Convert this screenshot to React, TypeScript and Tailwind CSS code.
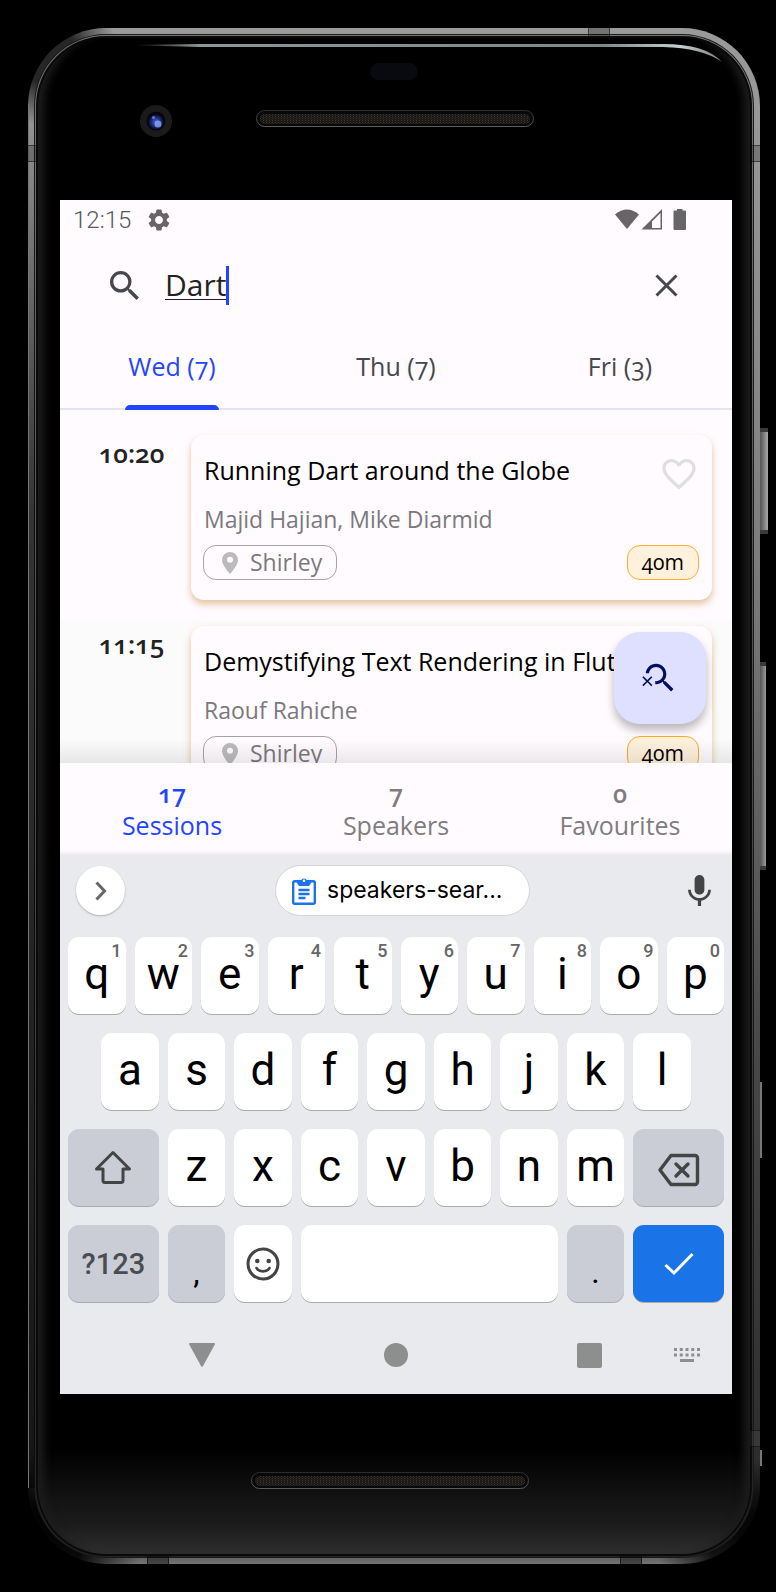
import type { ReactNode } from 'react';

type Key = { label: string; hint?: string; span: string; content?: ReactNode };

const letter = 'col-span-2 bg-white pb-1 text-[44px]';

const letters = (text: string): Key[] => text.split('').map((label) => ({ label, span: letter }));

function ShiftIcon() {
  return (
    <svg width="38" height="38" viewBox="0 0 38 38" fill="none" stroke="#444" strokeWidth="3" strokeLinejoin="round">
      <path d="M19 3.500 35.500 20H29v11.500a2 2 0 0 1-2 2H11a2 2 0 0 1-2-2V20H2.500Z" />
    </svg>
  );
}

function BackspaceIcon() {
  return (
    <svg width="42" height="34" viewBox="0 0 42 34" fill="none" stroke="#444" strokeWidth="3.400" strokeLinejoin="round" strokeLinecap="round">
      <path d="M13 2.500H37a2.500 2.500 0 0 1 2.500 2.500V29a2.500 2.500 0 0 1-2.500 2.500H13L2 17Z" />
      <path d="m18 11 12 12M30 11 18 23" />
    </svg>
  );
}

function SmileIcon() {
  return (
    <svg width="34" height="34" viewBox="0 0 34 34" fill="none" stroke="#444" strokeWidth="3">
      <circle cx="17" cy="17" r="15" />
      <circle cx="11.300" cy="14" r="2.300" fill="#444" stroke="none" />
      <circle cx="22.700" cy="14" r="2.300" fill="#444" stroke="none" />
      <path d="M10.500 21C13 25.500 21 25.500 23.500 21" strokeLinecap="round" strokeWidth="2.600" />
    </svg>
  );
}

function CheckIcon() {
  return (
    <svg width="30" height="24" viewBox="0 0 30 24" fill="none" stroke="#fff" strokeWidth="3">
      <path d="m1.500 13 8.500 8L28.500 2" />
    </svg>
  );
}

const keys: Key[] = [
  ...letters('qwertyuiop').map((key, i) => ({ ...key, hint: String((i + 1) % 10) })),
  { label: 'a', span: 'col-start-2 col-span-2 bg-white pb-1 text-[44px]' },
  ...letters('sdfghjkl'),
  { label: 'Shift', span: 'col-start-1 col-span-3 bg-[#cacdd6]', content: <ShiftIcon /> },
  ...letters('zxcvbnm'),
  { label: 'Delete', span: 'col-span-3 bg-[#cacdd6] pt-1', content: <BackspaceIcon /> },
  { label: '?123', span: 'col-span-3 bg-[#cacdd6] pt-[2px] text-[29px] font-medium text-[#4a4c50]' },
  { label: ',', span: 'col-span-2 bg-[#cacdd6] pt-[16px] text-[32px]' },
  { label: 'Emoji', span: 'col-span-2 bg-white', content: <SmileIcon /> },
  { label: 'Space', span: 'col-span-8 bg-white', content: <span /> },
  { label: '.', span: 'col-span-2 bg-[#cacdd6] pt-[16px] text-[32px]' },
  { label: 'Done', span: 'col-span-3 bg-[#1b73e8]', content: <CheckIcon /> },
];

function KeyButton({ item }: { item: Key }) {
  return (
    <button
      type="button"
      aria-label={item.label}
      className={`relative flex h-[77px] items-center justify-center rounded-[11px] leading-none shadow-[0_1px_0_#a9abae] ${item.span}`}
    >
      {item.content ?? item.label}
      {item.hint && (
        <span className="absolute top-[5px] right-1 text-[18px] leading-[18px] font-medium text-[#666]">{item.hint}</span>
      )}
    </button>
  );
}

function StatusBar() {
  return (
    <div className="flex h-10 items-center justify-between pr-[46px] pl-[13px] font-[Roboto,sans-serif] text-[24px] font-light text-[#58565a] lining-nums">
      <div className="flex items-center gap-[17px]">
        <span>12:15</span>
        <svg width="22" height="22" viewBox="2 2 20 20" fill="#676568">
          <path d="M19.140 12.940c.04-.3.06-.61.06-.94 0-.32-.02-.64-.07-.94l2.030-1.580c.18-.14.23-.41.12-.61l-1.920-3.320c-.12-.22-.37-.29-.59-.22l-2.390.96c-.5-.38-1.030-.7-1.620-.94l-.36-2.540c-.04-.24-.24-.41-.48-.41h-3.840c-.24 0-.43.17-.47.41l-.36 2.540c-.59.24-1.130.57-1.620.94l-2.390-.96c-.22-.08-.47 0-.59.22L2.740 8.870c-.12.21-.08.47.12.61l2.030 1.580c-.05.3-.09.63-.09.94s.02.64.07.94l-2.030 1.580c-.18.14-.23.41-.12.61l1.920 3.320c.12.22.37.29.59.22l2.390-.96c.5.38 1.030.7 1.620.94l.36 2.540c.05.24.24.41.48.41h3.840c.24 0 .44-.17.47-.41l.36-2.540c.59-.24 1.130-.56 1.620-.94l2.390.96c.22.08.47 0 .59-.22l1.920-3.320c.12-.22.07-.47-.12-.61l-2.010-1.580zM12 15.600c-1.980 0-3.600-1.620-3.600-3.600s1.620-3.600 3.600-3.600 3.600 1.620 3.600 3.600-1.620 3.600-3.600 3.600z" />
        </svg>
      </div>
      <svg width="71" height="22" viewBox="0 0 71 22" fill="#676568">
        <path d="M0 5.500Q12 -4.500 24 5.500L12 20Z" />
        <path fillRule="evenodd" d="M26.500 20.500 47 0V20.500ZM37 12.500V19H45.500V4Z" />
        <path d="M59.500 1.500h2.500V0h5.500v1.500H70q1 0 1 1V20q0 1-1 1H59.500q-1 0-1-1V2.500q0-1 1-1Z" />
      </svg>
    </div>
  );
}

const days = [
  { label: 'Wed (7)', active: true },
  { label: 'Thu (7)', active: false },
  { label: 'Fri (3)', active: false },
];

const sessions = [
  { time: '10:20', title: 'Running Dart around the Globe', by: 'Majid Hajian, Mike Diarmid', row: 'pt-[25px]' },
  { time: '11:15', title: 'Demystifying Text Rendering in Flutter', by: 'Raouf Rahiche', row: 'bg-[#fafbfa] pt-[6px]' },
];

const totals = [
  { count: 17, label: 'Sessions', tone: 'text-[#1f45ff]' },
  { count: 7, label: 'Speakers', tone: 'text-[#7f7d80]' },
  { count: 0, label: 'Favourites', tone: 'text-[#7f7d80]' },
];

function SessionRow({ time, title, by, row }: (typeof sessions)[number]) {
  return (
    <li className={`flex pb-5 pr-5 ${row}`}>
      <time className="w-[131px] shrink-0 pt-[2px] pl-[12px] text-center text-[26px] leading-[32px] font-semibold text-[#222]">
        {time}
      </time>
      <article className="min-w-0 flex-1 rounded-[13px] bg-[#fffbff] px-[13px] pt-[19px] pb-5 shadow-[0_4px_7px_rgba(200,140,60,0.5)]">
        <div className="flex items-start justify-between">
          <h2 className="truncate text-[25px] leading-[32px] font-medium text-black">{title}</h2>
          <button type="button" aria-label={`Add ${title} to favourites`} className="shrink-0">
            <svg width="40" height="40" viewBox="0 0 24 24" fill="#e0dfe0">
              <path d="M16.500 3c-1.740 0-3.410.81-4.500 2.090C10.910 3.810 9.240 3 7.500 3 4.420 3 2 5.420 2 8.500c0 3.780 3.400 6.860 8.550 11.540L12 21.350l1.450-1.320C18.600 15.360 22 12.280 22 8.500 22 5.420 19.580 3 16.500 3zm-4.400 15.550-.1.100-.1-.1C7.140 14.240 4 11.390 4 8.500 4 6.500 5.500 5 7.500 5c1.540 0 3.040.99 3.570 2.360h1.870C13.460 5.990 14.960 5 16.500 5c2 0 3.500 1.500 3.500 3.500 0 2.890-3.140 5.740-7.900 10.050z" />
            </svg>
          </button>
        </div>
        <p className="mt-2 text-[23px] leading-[34px] text-[#7b797c]">{by}</p>
        <div className="mt-[9px] -ml-px flex justify-between">
          <span className="flex h-[35px] items-center gap-3 rounded-[13px] border border-[#a5a3a6] pr-[14px] pl-[18px] text-[23px] text-[#7b797c]">
            <svg width="16" height="22" viewBox="0 0 16 22" fill="#bcbabc">
              <path fillRule="evenodd" d="M8 0a8 8 0 0 1 8 8c0 5.500-8 14-8 14S0 13.500 0 8a8 8 0 0 1 8-8Zm0 4.800a3 3 0 1 0 0 6 3 3 0 0 0 0-6Z" />
            </svg>
            Shirley
          </span>
          <span className="flex h-[35px] items-center rounded-[13px] border border-[#ffab2e] bg-[#fff1dc] px-[14px] text-[21px] font-medium text-black">
            40m
          </span>
        </div>
      </article>
    </li>
  );
}

function SearchApp() {
  return (
    <main className="bg-[#fffbff] font-['Open_Sans',sans-serif] oldstyle-nums">
      <StatusBar />
      <div className="flex h-[90px] items-center pr-[50px] pl-[50px]">
        <svg width="29" height="29" viewBox="3 3 17.500 17.500" fill="#46474c">
          <path d="M15.500 14h-.79l-.28-.27A6.471 6.471 0 0 0 16 9.500 6.500 6.500 0 1 0 9.500 16c1.610 0 3.090-.59 4.230-1.570l.27.28v.79l5 4.990L20.490 19l-4.990-5zm-6 0C7.010 14 5 11.990 5 9.500S7.010 5 9.500 5 14 7.010 14 9.500 11.990 14 9.500 14z" />
        </svg>
        <input
          type="text"
          aria-label="Search"
          defaultValue="Dart"
          className="ml-[26px] field-sizing-content text-[30px] leading-[42px] text-[#222] underline decoration-1 underline-offset-3 outline-none"
        />
        <span className="h-[39px] w-[3px] bg-[#1f45ff]" />
        <button type="button" aria-label="Clear search" className="ml-auto p-[4px]">
          <svg width="23" height="23" viewBox="0 0 23 23" stroke="#46474c" strokeWidth="3">
            <path d="m1.500 1.500 20 20M21.500 1.500l-20 20" />
          </svg>
        </button>
      </div>
      <nav className="grid grid-cols-3 border-b-2 border-[#e4e4f1]">
        {days.map((day) => (
          <button
            key={day.label}
            type="button"
            className={`relative h-[78px] pb-[4px] text-[25px] font-medium ${day.active ? 'text-[#1f45ff]' : 'text-[#46474c]'}`}
          >
            {day.label}
            {day.active && (
              <span className="absolute -bottom-[2px] left-1/2 h-[5px] w-[94px] -translate-x-1/2 rounded-t-[5px] bg-[#1f45ff]" />
            )}
          </button>
        ))}
      </nav>
      <section className="relative h-[353px] overflow-hidden">
        <ul>
          {sessions.map((session) => (
            <SessionRow key={session.time} {...session} />
          ))}
        </ul>
        <div className="absolute inset-x-0 bottom-0 h-6 bg-linear-to-t from-black/8 to-transparent" />
        <button
          type="button"
          aria-label="Close search"
          className="absolute right-[26px] bottom-[39px] flex size-[92px] items-center justify-center rounded-[26px] bg-[#dfe0ff] shadow-[0_6px_10px_rgba(0,0,0,0.28)]"
        >
          <svg width="38" height="38" viewBox="0 0 24 24" fill="#00105c">
            <path d="M15.500 14h-.79l-.28-.27C15.410 12.590 16 11.110 16 9.500 16 5.910 13.090 3 9.500 3 6.080 3 3.280 5.640 3.030 9h2.020C5.300 6.750 7.180 5 9.500 5 11.990 5 14 7.010 14 9.500S11.990 14 9.500 14c-.17 0-.33-.03-.5-.05v2.020c.17.02.33.03.5.03 1.610 0 3.090-.59 4.230-1.570l.27.28v.79l5 4.990L20.490 19l-4.990-5z" />
            <path d="M6.470 10.820 4 13.290l-2.470-2.470-.71.71L3.290 14 .82 16.470l.71.71L4 14.710l2.470 2.470.71-.71L4.710 14l2.470-2.470z" />
          </svg>
        </button>
      </section>
      <nav className="grid h-[92px] grid-cols-3 pt-[14px] shadow-[inset_0_-5px_5px_-4px_rgba(0,0,0,0.12)]">
        {totals.map((total) => (
          <button key={total.label} type="button" className={`flex flex-col items-center text-[25px] leading-[32px] ${total.tone}`}>
            <span className="font-semibold">{total.count}</span>
            <span>{total.label}</span>
          </button>
        ))}
      </nav>
    </main>
  );
}

function Keyboard() {
  return (
    <section aria-label="Keyboard" className="bg-[#e8eaed] px-2 font-[Roboto,sans-serif] text-black">
      <div className="flex items-center justify-between pt-[10px] pr-[13px] pb-[21px] pl-2">
        <button type="button" aria-label="More" className="flex size-[49px] items-center justify-center rounded-full bg-white shadow-[0_1px_2px_rgba(0,0,0,0.25)]">
          <svg width="12" height="20" viewBox="0 0 12 20" fill="none" stroke="#666" strokeWidth="3">
            <path d="m1.500 1.500 8 8.500-8 8.500" />
          </svg>
        </button>
        <button type="button" className="mr-2 flex h-[51px] w-[255px] items-center gap-[11px] rounded-full border border-[#d2d4d7] bg-white pl-4 font-[Inter,sans-serif] text-[23px]">
          <svg width="24" height="28" viewBox="0 0 24 28" fill="none" stroke="#1b73e8" strokeWidth="2.400">
            <rect x="1.200" y="4.200" width="21.600" height="22.600" rx="1.500" />
            <path d="M5 3.500h4a3.200 3.200 0 0 1 6 0h4V6l-2 3H7L5 6Z" fill="#1b73e8" stroke="none" />
            <circle cx="12" cy="3.800" r="1.300" fill="#fff" stroke="none" />
            <path d="M6.500 13h11M6.500 17h11M6.500 21h7" />
          </svg>
          speakers-sear...
        </button>
        <button type="button" aria-label="Voice input">
          <svg width="23" height="31" viewBox="5 2 14 19" fill="#444">
            <path d="M12 14c1.660 0 2.990-1.340 2.990-3L15 5c0-1.660-1.340-3-3-3S9 3.340 9 5v6c0 1.660 1.340 3 3 3zm5.300-3c0 3-2.540 5.100-5.300 5.100S6.700 14 6.700 11H5c0 3.410 2.720 6.230 6 6.720V21h2v-3.280c3.280-.48 6-3.300 6-6.720h-1.700z" />
          </svg>
        </button>
      </div>
      <div className="grid grid-cols-20 gap-x-[9px] gap-y-[19px]">
        {keys.map((item) => (
          <KeyButton key={item.label} item={item} />
        ))}
      </div>
      <div className="grid h-[92px] grid-cols-[1fr_auto_1fr] items-center pt-[14px]">
        <button type="button" aria-label="Back" className="ml-[121px] justify-self-start">
          <svg width="26" height="24" viewBox="0 0 26 24" fill="#8c8f8d">
            <path d="M1 0h24q1.500 0 .8 1.500L14 23q-1 1.600-2 0L.2 1.500Q-.4 0 1 0Z" />
          </svg>
        </button>
        <button type="button" aria-label="Home" className="size-6 rounded-full bg-[#8c8f8d]" />
        <div className="flex items-center justify-end gap-[72px] pr-6">
          <button type="button" aria-label="Overview" className="size-[25px] rounded-[2px] bg-[#8c8f8d]" />
          <button type="button" aria-label="Switch keyboard">
            <svg width="26" height="14" viewBox="0 0 26 14" fill="#8c8f8d">
              <path d="M0 0h3v3H0zM5.750 0h3v3h-3zM11.500 0h3v3h-3zM17.250 0h3v3h-3zM23 0h3v3h-3zM0 5.500h3v3H0zM5.750 5.500h3v3h-3zM11.500 5.500h3v3h-3zM17.250 5.500h3v3h-3zM23 5.500h3v3h-3zM6 11h14v3H6z" />
            </svg>
          </button>
        </div>
      </div>
    </section>
  );
}

function Speaker({ x, y }: { x: number; y: number }) {
  return (
    <g>
      <rect x={x + 0.5} y={y + 0.5} width="277" height="16" rx="8" fill="#080808" stroke="url(#rim)" />
      <rect x={x + 4} y={y + 4} width="270" height="10" rx="5" fill="url(#mesh)" />
    </g>
  );
}

function TopBezel() {
  return (
    <svg className="block w-full" viewBox="0 0 712 162" aria-hidden="true">
      <defs>
        <linearGradient id="shine" x1="92" x2="684" y1="0" y2="0" gradientUnits="userSpaceOnUse">
          <stop offset="0" stopColor="#9aa5a5" stopOpacity="0" />
          <stop offset=".12" stopColor="#8d9696" />
          <stop offset=".8" stopColor="#7f8888" />
          <stop offset=".93" stopColor="#c5d0d0" />
          <stop offset="1" stopColor="#777" />
        </linearGradient>
        <linearGradient id="rim" x1="0" x2="0" y1="0" y2="1">
          <stop offset="0" stopColor="#2c2c2c" />
          <stop offset="1" stopColor="#5e5e5c" />
        </linearGradient>
        <pattern id="mesh" width="3" height="2" patternUnits="userSpaceOnUse">
          <rect width="3" height="2" fill="#171614" />
          <rect width="1" height="1" fill="#3c372f" />
          <rect x="1.500" y="1" width="1" height="1" fill="#2e2a24" />
        </pattern>
        <radialGradient id="lens">
          <stop offset="0" stopColor="#4d68d8" />
          <stop offset=".6" stopColor="#1c2a78" />
          <stop offset="1" stopColor="#05060f" />
        </radialGradient>
      </defs>
      <path d="M92 7 L160 6H625Q668 6 684 24Q664 10 625 9H160Z" fill="url(#shine)" />
      <rect x="332" y="25" width="48" height="17" rx="8.500" fill="#090a0f" />
      <circle cx="118" cy="83" r="16" fill="#1c1a1b" />
      <circle cx="118" cy="83" r="9.500" fill="#05060f" />
      <circle cx="118" cy="84" r="8" fill="url(#lens)" />
      <circle cx="120" cy="86" r="3.500" fill="#90a4f4" opacity=".8" />
      <circle cx="115.500" cy="79.500" r="1.500" fill="#5f79d8" />
      <Speaker x={218} y={72} />
    </svg>
  );
}

function BottomBezel() {
  return (
    <svg className="block w-full" viewBox="0 0 712 160" aria-hidden="true">
      <Speaker x={213} y={78} />
    </svg>
  );
}

export default function App() {
  return (
    <div className="min-h-screen bg-black pt-7 pr-4 pb-7 pl-7">
      <div className="relative rounded-[78px] bg-[radial-gradient(circle_70px_at_20px_28px,rgba(0,0,0,0.75)_40%,transparent),radial-gradient(circle_100px_at_12px_calc(100%-16px),rgba(0,0,0,0.9)_40%,transparent),radial-gradient(circle_90px_at_calc(100%-12px)_calc(100%-16px),rgba(0,0,0,0.8)_40%,transparent),linear-gradient(to_bottom,#9a9a9a_0%,#949494_10%,#7c7c7c_35%,#4a4a4a_65%,#2c2c2c_94%,#1c1c1c_98%,#747474_100%)] p-[6px]">
        <div className="absolute top-[76px] bottom-[76px] left-0 w-[7px] border-l border-[#777] bg-linear-to-b from-transparent via-black/60 via-30% to-black/50" />
        <div className="absolute top-[400px] -right-[8px] h-[106px] w-[8px] border-y-4 border-[#3a3a3a] bg-linear-to-r from-[#555] to-[#aaa]" />
        <div className="absolute top-[634px] -right-[6px] h-[208px] w-[6px] border-y-4 border-[#3a3a3a] bg-linear-to-r from-[#555] to-[#999]" />
        <div className="absolute top-[1054px] -right-[2px] h-[76px] w-[2px] bg-[#777]" />
        <div className="absolute top-[1422px] -right-[2px] h-[16px] w-[2px] bg-[#777]" />
        <div className="absolute top-[117px] left-0 h-[17px] w-[10px] border-y border-black/50 bg-black/20" />
        <div className="absolute top-[117px] right-0 h-[17px] w-[10px] border-y border-black/50 bg-black/20" />
        <div className="absolute top-[1402px] right-0 h-[17px] w-[10px] border-y border-black/50 bg-white/5" />
        <div className="absolute top-0 right-[150px] h-[9px] w-[22px] border-x border-black/50 bg-black/25" />
        <div className="absolute bottom-0 left-[119px] h-[8px] w-[22px] border-x border-black/60 bg-black/40" />
        <div className="absolute right-[118px] bottom-0 h-[8px] w-[22px] border-x border-black/60 bg-black/40" />
        <div className="rounded-[72px] bg-[#191919] p-px">
          <div className="rounded-[71px] bg-linear-to-b from-[#777] via-[#4a4a4a] to-[#222] p-px">
            <div className="rounded-[70px] bg-[#0a0a0a] p-[2px]">
              <div className="rounded-[68px] bg-[linear-gradient(to_bottom,#000_0%,#000_93%,#111_96%,#1b1b1b_98%,#2e2e2e_100%)] shadow-[inset_14px_0_8px_-8px_#1c1c1c,inset_-14px_0_8px_-8px_#1c1c1c]">
                <TopBezel />
                <div className="mr-[18px] ml-[22px]">
                  <SearchApp />
                  <Keyboard />
                </div>
                <BottomBezel />
              </div>
            </div>
          </div>
        </div>
      </div>
    </div>
  );
}
